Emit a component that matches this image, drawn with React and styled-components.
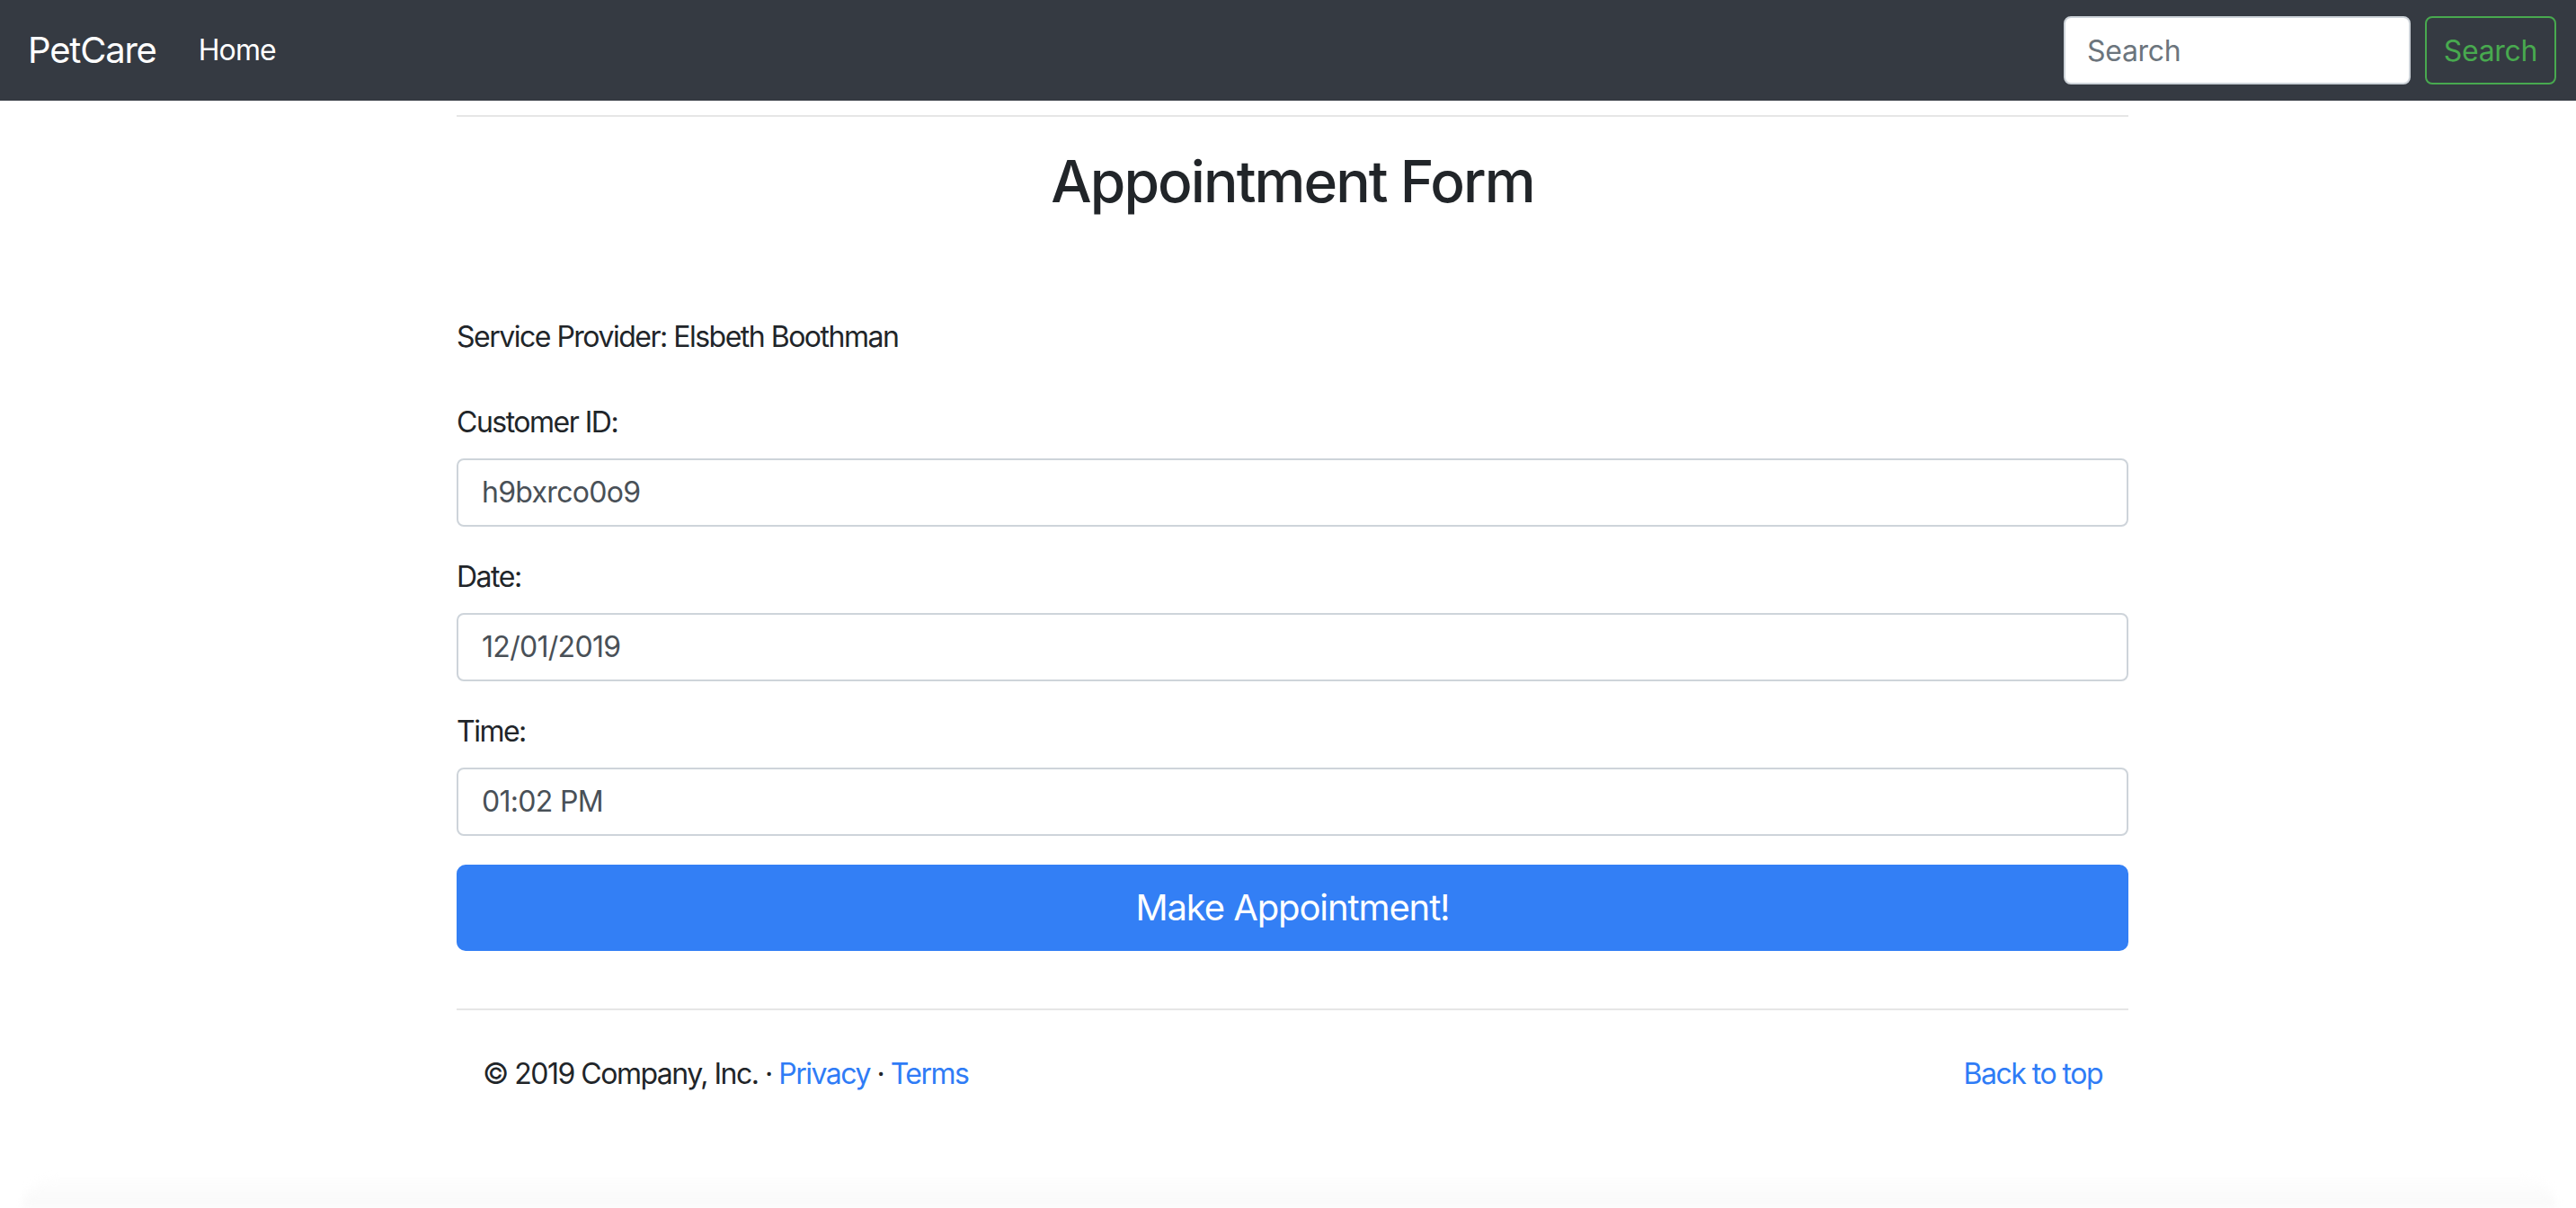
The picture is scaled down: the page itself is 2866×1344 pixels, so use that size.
import React from "react";
import styled, { createGlobalStyle } from "styled-components";

const GlobalStyle = createGlobalStyle`
  html, body {
    margin: 0;
    padding: 0;
    background: #fff;
  }
  body {
    font-family: Inter, "Liberation Sans", sans-serif;
    color: #212529;
    font-size: 32px;
    line-height: 1.5;
    letter-spacing: -1.5px;
  }
  * { box-sizing: border-box; }
`;

function App() {
  return (
    <Page>
      <GlobalStyle />
      <Navbar>
        <NavLeft>
          <Brand href="#">PetCare</Brand>
          <NavLink href="#">Home</NavLink>
        </NavLeft>
        <SearchForm onSubmit={(e) => e.preventDefault()}>
          <SearchInput placeholder="Search" />
          <SearchButton type="submit">Search</SearchButton>
        </SearchForm>
      </Navbar>

      <Main>
        <Rule />
        <Title>Appointment Form</Title>
        <Provider>Service Provider: Elsbeth Boothman</Provider>

        <Form onSubmit={(e) => e.preventDefault()}>
          <Group>
            <Label>Customer ID:</Label>
            <Field defaultValue="h9bxrco0o9" />
          </Group>
          <Group>
            <Label>Date:</Label>
            <Field defaultValue="12/01/2019" />
          </Group>
          <Group>
            <Label>Time:</Label>
            <Field defaultValue="01:02 PM" />
          </Group>
          <Submit type="submit">Make Appointment!</Submit>
        </Form>

        <Rule $top={64} />
        <Footer>
          <p>
            © 2019 Company, Inc. · <Link href="#">Privacy</Link> ·{" "}
            <Link href="#">Terms</Link>
          </p>
          <Link href="#">Back to top</Link>
        </Footer>
      </Main>
      <Shade />
    </Page>
  );
}

const Page = styled.div`
  min-height: 1344px;
  display: flex;
  flex-direction: column;
  overflow: hidden;
`;

const Navbar = styled.nav`
  height: 112px;
  background: #353a42;
  display: flex;
  align-items: center;
  justify-content: space-between;
  padding: 0 22px 0 31px;
`;

const NavLeft = styled.div`
  display: flex;
  align-items: center;
`;

const Brand = styled.a`
  color: #fff;
  font-size: 40px;
  text-decoration: none;
  margin-right: 31px;
  letter-spacing: -1.2px;
`;

const NavLink = styled.a`
  color: #fff;
  font-size: 32px;
  text-decoration: none;
  padding: 0 16px;
  letter-spacing: -0.9px;
`;

const SearchForm = styled.form`
  display: flex;
  align-items: center;
  gap: 16px;
`;

const SearchInput = styled.input`
  width: 386px;
  height: 76px;
  border: 2px solid #ced4da;
  border-radius: 8px;
  padding: 0 24px;
  font-family: inherit;
  font-size: 32px;
  letter-spacing: -0.3px;
  color: #495057;
  outline: none;
  &::placeholder { color: #6c757d; }
`;

const SearchButton = styled.button`
  width: 146px;
  height: 76px;
  background: transparent;
  border: 2px solid #48a94f;
  border-radius: 8px;
  color: #48a94f;
  font-family: inherit;
  font-size: 32px;
  padding: 0;
  letter-spacing: -0.3px;
`;

const Main = styled.main`
  width: 1860px;
  margin-left: calc(50% - 925px);
  display: flex;
  flex-direction: column;
`;

const Rule = styled.hr`
  margin: ${(p) => p.$top ?? 16}px 0 0;
  border: 0;
  border-top: 2px solid #e6e6e6;
  width: 100%;
`;

const Title = styled.h2`
  margin: 34px 0 0;
  font-size: 64px;
  font-weight: 500;
  line-height: 1.2;
  text-align: center;
  letter-spacing: -1.9px;
`;

const Provider = styled.p`
  margin: 110px 0 47px;
`;

const Form = styled.form`
  display: flex;
  flex-direction: column;
`;

const Group = styled.div`
  display: flex;
  flex-direction: column;
  margin-bottom: 32px;
`;

const Label = styled.label`
  margin-bottom: 16px;
`;

const Field = styled.input`
  height: 76px;
  border: 2px solid #ced4da;
  border-radius: 8px;
  padding: 0 26px;
  font-family: inherit;
  font-size: 32px;
  color: #495057;
  outline: none;
  letter-spacing: -0.7px;
`;

const Submit = styled.button`
  height: 96px;
  border: none;
  border-radius: 10px;
  background: #337ff5;
  color: #fff;
  font-family: inherit;
  font-size: 40px;
  letter-spacing: -1.1px;
`;

const Footer = styled.footer`
  display: flex;
  justify-content: space-between;
  align-items: flex-start;
  padding: 47px 29px 0;
  p { margin: 0; }
`;

const Link = styled.a`
  color: #2f7cf6;
  text-decoration: none;
`;

const Shade = styled.div`
  margin: auto 22px 0 25px;
  height: 34px;
  border-radius: 60px 60px 0 0;
  background: linear-gradient(#fefefe, #f9f9f9);
  filter: blur(4px);
`;

export default App;
